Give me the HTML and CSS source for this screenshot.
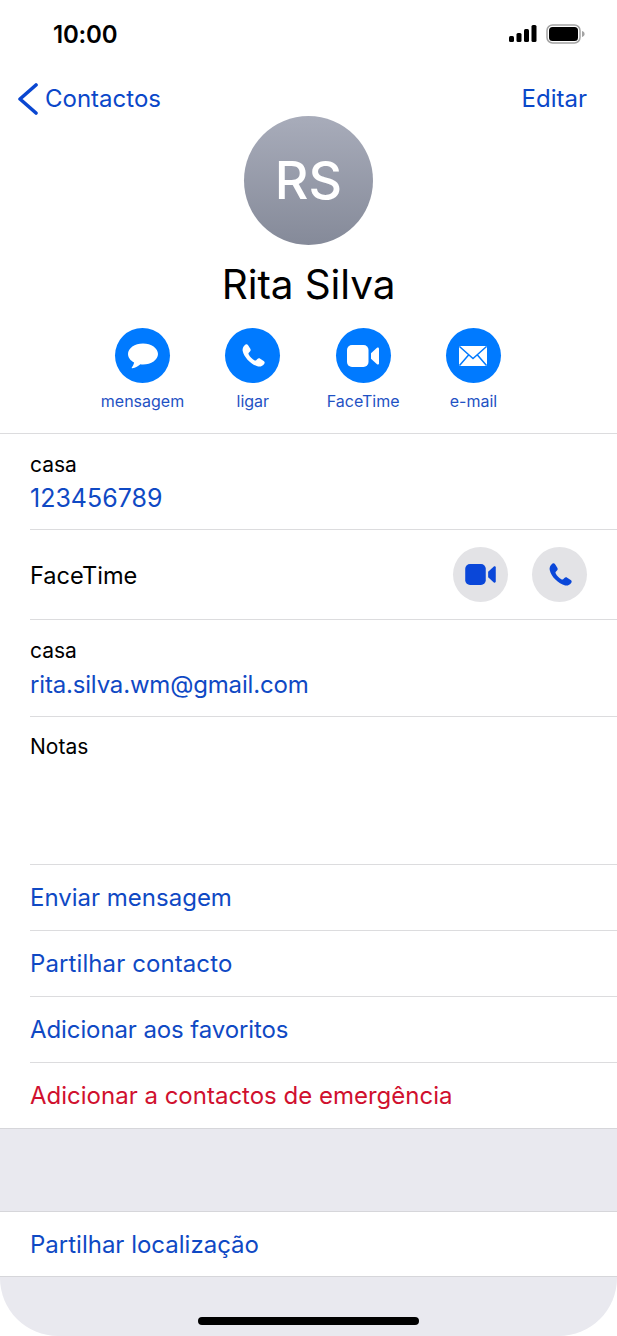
FILE: index.html
```html
<!DOCTYPE html>
<html lang="pt">
<head>
<meta charset="utf-8">
<title>Rita Silva</title>
<link rel="stylesheet" href="styles.css">
</head>
<body>
<div class="phone">
  <header class="status">
    <span class="time">10:00</span>
    <span class="status-icons">
      <svg width="28" height="17" viewBox="0 0 28 17"><rect x="0" y="11" width="5" height="6" rx="1.5"/><rect x="7.5" y="8" width="5" height="9" rx="1.5"/><rect x="15" y="4" width="5" height="13" rx="1.5"/><rect x="22.5" y="0" width="5" height="17" rx="1.5"/></svg>
      <svg width="40" height="20" viewBox="0 0 40 20"><rect x="1" y="1" width="33" height="18" rx="5.5" fill="none" stroke="#a3a3a3" stroke-width="1.5"/><rect x="3" y="3" width="29" height="14" rx="3.5"/><path d="M36 7c1.6.4 2.6 1.6 2.6 3s-1 2.600-2.600 3z" fill="#a3a3a3"/></svg>
    </span>
  </header>
  <nav class="nav">
    <a class="back"><svg width="20" height="32" viewBox="0 0 20 32"><path d="M18 2 2 16 18 30" fill="none" stroke="#0a47d1" stroke-width="3.600" stroke-linecap="round" stroke-linejoin="round"/></svg>Contactos</a>
    <a class="edit">Editar</a>
  </nav>
  <section class="profile">
    <div class="avatar">RS</div>
    <h1 class="name">Rita Silva</h1>
    <div class="actions">
      <div class="action"><span class="circle"><svg width="30" height="26" viewBox="0 0 30 26"><path d="M15 .5C6.700.5 0 5.200 0 11c0 3.500 2.400 6.600 6.100 8.500-.3 1.800-1.100 3.500-2.300 4.900-.3.400 0 .9.500.8 3.200-.4 6.200-2 8.100-3.900 .8.100 1.700.2 2.600.2 8.300 0 15-4.700 15-10.500S23.300.5 15 .5z" fill="#fff"/></svg></span><span class="label">mensagem</span></div>
      <div class="action"><span class="circle"><svg width="28" height="28" viewBox="0 0 28 28"><path d="M6.300 2.700c1-.7 2.200-.4 2.800.6l2.200 3.500c.6 1 .5 2-.3 2.800l-1.200 1.200c-.4.400-.5 1-.2 1.500 1.400 2.700 3.400 4.700 6.100 6.100.5.300 1.100.2 1.500-.2l1.200-1.200c.8-.8 1.800-.9 2.800-.3l3.500 2.200c1 .6 1.300 1.800.6 2.800-1.400 2.100-3.700 3.200-6.100 2.700C12.400 22.900 5.100 15.600 3.700 9c-.5-2.500.6-4.800 2.600-6.300z" fill="#fff"/></svg></span><span class="label">ligar</span></div>
      <div class="action"><span class="circle"><svg width="32" height="22" viewBox="0 0 32 22"><rect x="0" y="0" width="21.500" height="22" rx="5" fill="#fff"/><path d="M24 8.200 30 2.700c.7-.6 2-.2 2 .9v14.800c0 1.100-1.300 1.500-2 .9l-6-5.500z" fill="#fff"/></svg></span><span class="label">FaceTime</span></div>
      <div class="action"><span class="circle"><svg width="30" height="22" viewBox="0 0 30 22"><rect x="1" y="1" width="28" height="20" rx="1.500" fill="#fff"/><path d="M1.500 1.500 15 13.500 28.500 1.500M1.500 20.500 11 9.500M28.500 20.500 19 9.500" fill="none" stroke="#007aff" stroke-width="1.500"/></svg></span><span class="label">e-mail</span></div>
    </div>
  </section>
  <section class="list">
    <div class="row row-phone"><span class="key">casa</span><span class="link digits">123456789</span></div>
    <div class="row row-facetime">
      <span class="plain">FaceTime</span>
      <span class="ft-buttons">
        <span class="ft-btn"><svg width="31" height="21" viewBox="0 0 32 22"><rect x="0" y="0" width="21.500" height="22" rx="5" fill="#0a47d9"/><path d="M24 8.200 30 2.700c.7-.6 2-.2 2 .9v14.800c0 1.100-1.300 1.500-2 .9l-6-5.500z" fill="#0a47d9"/></svg></span>
        <span class="ft-btn"><svg width="28" height="28" viewBox="0 0 28 28"><path d="M6.300 2.700c1-.7 2.200-.4 2.800.6l2.200 3.500c.6 1 .5 2-.3 2.800l-1.200 1.200c-.4.400-.5 1-.2 1.500 1.400 2.700 3.400 4.700 6.100 6.100.5.300 1.100.2 1.500-.2l1.200-1.200c.8-.8 1.800-.9 2.800-.3l3.500 2.200c1 .6 1.300 1.800.6 2.800-1.400 2.100-3.700 3.200-6.100 2.700C12.400 22.900 5.100 15.600 3.700 9c-.5-2.500.6-4.800 2.600-6.300z" fill="#0a47d9"/></svg></span>
      </span>
    </div>
    <div class="row row-email"><span class="key">casa</span><span class="link mail">rita.silva.wm@gmail.com</span></div>
    <div class="row row-notes"><span class="key">Notas</span></div>
    <div class="row row-action"><span class="link">Enviar mensagem</span></div>
    <div class="row row-action"><span class="link loose">Partilhar contacto</span></div>
    <div class="row row-action"><span class="link tight">Adicionar aos favoritos</span></div>
    <div class="row row-action row-last"><span class="danger">Adicionar a contactos de emergência</span></div>
  </section>
  <div class="gap"></div>
  <section class="share"><span class="link">Partilhar localização</span></section>
  <footer class="foot"><span class="home"></span></footer>
</div>
</body>
</html>
```

FILE: styles.css
```css
* { box-sizing: border-box; }
html, body { margin: 0; padding: 0; background: #fff; }
body { font-family: Inter, "Liberation Sans", sans-serif; color: #000; }
.phone { width: 617px; height: 1336px; display: flex; flex-direction: column; overflow: hidden; background: #fff; }

.status { height: 67px; flex: none; display: flex; justify-content: space-between; align-items: center; padding: 0 31px 0 53px; }
.time { font-size: 24px; line-height: 29px; padding-top: 2px; font-weight: 600; letter-spacing: -0.2px; }
.status-icons { display: flex; align-items: center; gap: 9px; }
.status-icons svg { display: block; fill: #000; }

.nav { height: 49px; flex: none; display: flex; justify-content: space-between; align-items: center; padding: 14px 30px 0 18px; font-size: 24px; color: #0a47c9; }
.back { display: flex; align-items: center; gap: 7px; }
.back svg { display: block; }

.profile { flex: none; height: 318px; display: flex; flex-direction: column; align-items: center; border-bottom: 1px solid #dcdcde; }
.avatar { width: 129px; height: 129px; border-radius: 50%; background: linear-gradient(#a8acba, #858a99); color: #fff; font-size: 52px; font-weight: 500; display: flex; align-items: center; justify-content: center; }
.name { margin: 14px 0 0; font-size: 40.5px; line-height: 52px; font-weight: 400; letter-spacing: -0.1px; }
.actions { display: flex; margin-top: 17px; padding-right: 1px; }
.action { width: 110.33px; display: flex; flex-direction: column; align-items: center; }
.circle { width: 55.3px; height: 55.3px; border-radius: 50%; background: #007aff; display: flex; align-items: center; justify-content: center; }
.circle svg { display: block; }
.label { margin-top: 8px; font-size: 16px; line-height: 20px; color: #1f52c4; }

.list { flex: none; padding-left: 30px; }
.row { border-bottom: 1px solid #dcdcde; display: flex; }
.row-phone { height: 96px; flex-direction: column; padding-top: 18px; }
.row-facetime { height: 90px; align-items: center; justify-content: space-between; padding-right: 30px; }
.row-email { height: 97px; flex-direction: column; padding-top: 18px; }
.row-notes { height: 148px; padding-top: 17px; }
.row-action { height: 66px; align-items: center; }
.row-last { height: 65px; border-bottom: none; }
.key { font-size: 21px; line-height: 26px; }
.plain { font-size: 23.6px; padding-top: 2px; }
.link { font-size: 24px; line-height: 44px; color: #0f49c4; }
.digits { font-size: 25px; line-height: 41px; }
.mail { line-height: 41px; letter-spacing: -0.17px; }
.loose { letter-spacing: 0.1px; }
.tight { letter-spacing: -0.1px; }
.danger { font-size: 24px; line-height: 44px; color: #d0102e; }
.ft-buttons { display: flex; gap: 24px; }
.ft-btn { width: 55px; height: 55px; border-radius: 50%; background: #e3e3e6; display: flex; align-items: center; justify-content: center; }
.ft-btn svg { display: block; }

.gap { flex: none; height: 84px; background: #e9e9ef; border-top: 1px solid #d6d6da; border-bottom: 1px solid #d6d6da; }
.share { flex: none; height: 65px; padding: 1px 0 0 30px; display: flex; align-items: center; border-bottom: 1px solid #d6d6da; }
.foot { flex: 1; background: #e9e9ef; border-radius: 0 0 58px 58px; display: flex; justify-content: center; align-items: flex-start; padding-top: 40px; }
.home { width: 221px; height: 8px; border-radius: 4px; background: #000; }
```
